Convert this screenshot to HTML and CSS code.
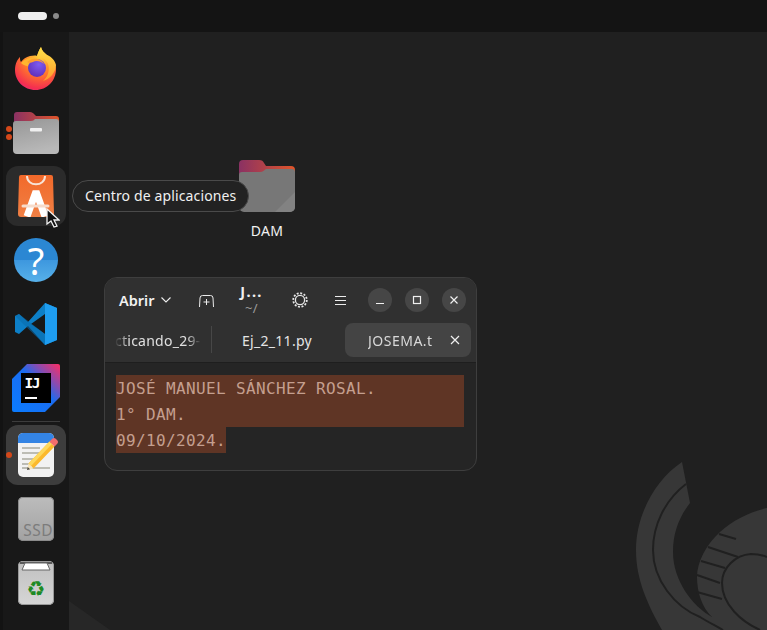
FILE: index.html
```html
<!DOCTYPE html>
<html lang="es">
<head>
<meta charset="utf-8">
<title>Escritorio</title>
<link rel="stylesheet" href="styles.css">
</head>
<body>
<div class="screen">
  <header class="topbar">
    <span class="ws-active"></span>
    <span class="ws-dot"></span>
  </header>
  <div class="main">
    <nav class="dock">
      <div class="slot slot-fx">
        <svg class="ic" width="44" height="44" viewBox="0 0 44 44">
          <defs>
            <radialGradient id="fxb" cx="0.62" cy="0.2" r="0.95"><stop offset="0" stop-color="#ffd93a"/><stop offset="0.45" stop-color="#ff7a2a"/><stop offset="0.8" stop-color="#f5304f"/><stop offset="1" stop-color="#e5218f"/></radialGradient>
            <linearGradient id="fxy" x1="0" y1="0" x2="0" y2="1"><stop offset="0" stop-color="#ffe34a"/><stop offset="1" stop-color="#ff9a2a"/></linearGradient>
            <radialGradient id="fxp" cx="0.6" cy="0.3" r="0.8"><stop offset="0" stop-color="#7d5cf0"/><stop offset="1" stop-color="#5d2bb5"/></radialGradient>
          </defs>
          <path d="M27 1c1 4 3 5 6 8 5 4 9 10 9 14 0 12-9 21-20.500 21C10 44 1 35 1 24c0-3 .5-6 2-9 1-2 2-3 3-4 0 2 0 4 1 5 2-3 5-5 9-6 2 0 5-1 7 0 1-3 2-6 4-9z" fill="url(#fxb)"/>
          <path d="M27 1c-2 3-3 6-4 9 4 1 9 3 11 8 2 6 0 13-5 17 7-2 13-9 13-16-1-4-4-8-9-10-3-2-5-4-6-8z" fill="url(#fxy)"/>
          <path d="M7 17c3-4 9-6 14-5-3 1-6 3-7 5 3-1 6 0 8 1l-6 3c-2-1-6-1-9-4z" fill="#ffb52e"/>
          <circle cx="23" cy="22" r="9" fill="url(#fxp)"/>
          <path d="M13 16c3-3 8-4 11-3 3 1 5 3 6 5-3-3-8-4-11-2-2 1-4 1-6 0z" fill="#ff9d2e"/>
        </svg>
      </div>
      <div class="slot slot-files">
        <span class="pips"><i class="pip"></i><i class="pip"></i></span>
        <svg class="ic" width="46" height="42" viewBox="0 0 46 42">
          <defs>
            <linearGradient id="fb" x1="0" y1="0" x2="1" y2="0"><stop offset="0" stop-color="#8a3163"/><stop offset="1" stop-color="#e0552a"/></linearGradient>
            <linearGradient id="ff" x1="0" y1="0" x2="0.3" y2="1"><stop offset="0" stop-color="#969696"/><stop offset="1" stop-color="#b8b8b8"/></linearGradient>
          </defs>
          <path d="M1 3a3 3 0 0 1 3-3h13c2 0 3 1 4 2l2 2h20a3 3 0 0 1 3 3v12H1z" fill="url(#fb)"/>
          <path d="M0 12a3 3 0 0 1 3-3h15c2 0 3-1 4-2h21a3 3 0 0 1 3 3v28a4 4 0 0 1-4 4H4a4 4 0 0 1-4-4z" fill="url(#ff)"/>
          <rect x="17" y="16" width="12" height="3.500" rx="1" fill="#f0f0f0"/>
        </svg>
      </div>
      <div class="slot tile-hover">
        <svg class="ic" width="36" height="42" viewBox="0 0 36 42">
          <defs><linearGradient id="st" x1="0" y1="0" x2="0" y2="1"><stop offset="0" stop-color="#f2692a"/><stop offset="1" stop-color="#f08045"/></linearGradient></defs>
          <path d="M3 0h30a2 2 0 0 1 2 2l1 37a3 3 0 0 1-3 3H3a3 3 0 0 1-3-3L1 2a2 2 0 0 1 2-2z" fill="url(#st)"/>
          <path d="M9 1c0 11 18 11 18 0" fill="none" stroke="#f7e3d6" stroke-width="2"/>
          <path d="M9 41.500 18 16.500l9 25" fill="none" stroke="#fff" stroke-width="7" stroke-linejoin="bevel"/>
          <path d="M5 31h25" stroke="#f7dccb" stroke-width="3" stroke-linecap="round"/>
        </svg>
        <svg class="cursor" width="14" height="20" viewBox="0 0 14 20"><path d="M1 1v15l4-3 3 6 3-1-3-6h5z" fill="#111" stroke="#f2f2f2" stroke-width="1.300"/></svg>
      </div>
      <div class="slot slot-help">
        <div class="help"><span class="help-q">?</span></div>
      </div>
      <div class="slot slot-code">
        <svg class="ic" width="44" height="44" viewBox="0 0 44 44">
          <path d="M31 1 14 20 5 12l-4 2v16l4 2 9-8 17 19 12-5V6z" fill="#0d7fc7"/>
          <path d="M31 1l12 5v32l-12 5z" fill="#1e9df0"/>
          <path d="M31 12v20L17 22z" fill="#181818"/>
          <path d="M1 14l4-2 26 20v11z" fill="#0a6cab" opacity="0.55"/>
        </svg>
      </div>
      <div class="slot slot-ij">
        <svg class="ic" width="48" height="48" viewBox="0 0 48 48">
          <defs><linearGradient id="ij" x1="0" y1="1" x2="1" y2="0"><stop offset="0" stop-color="#0a7cff"/><stop offset="0.55" stop-color="#1a6cf0"/><stop offset="0.75" stop-color="#8a4bb0"/><stop offset="1" stop-color="#ff2d62"/></linearGradient></defs>
          <path d="M15 0h31a2 2 0 0 1 2 2v31L33 48H2a2 2 0 0 1-2-2V15z" fill="url(#ij)"/>
          <rect x="9" y="9" width="30" height="30" fill="#000"/>
          <text x="12.500" y="24" class="ij-text">IJ</text>
          <rect x="13" y="33" width="12" height="2" fill="#fff"/>
        </svg>
      </div>
      <div class="dock-sep"></div>
      <div class="slot tile-active">
        <span class="pips"><i class="pip"></i></span>
        <svg class="ic ic-open" width="36" height="44" viewBox="0 0 36 44">
          <rect x="0" y="0" width="36" height="44" rx="5" fill="#f2f2f2"/>
          <path d="M5 0h26a5 5 0 0 1 5 5v5H0V5a5 5 0 0 1 5-5z" fill="#3484e4"/>
          <path d="M4 15h18M4 20h17M4 26h13M4 31h9M4 35h28" stroke="#bcbcb4" stroke-width="2"/>
          <path d="M13 33 10.500 30.600 31.500 8.600 36.500 13.400 15.500 35.400z" fill="#fbb92d"/>
          <path d="M10.500 30.600 31.500 8.600 34 11 13 33z" fill="#fdd85c"/>
          <path d="M9 37l1.500-6.400 5 4.800z" fill="#f7e6bd"/>
          <path d="M9 37l.7-3 2.400 2.300z" fill="#444"/>
          <path d="M31.500 8.600 34 6a2.800 2.800 0 0 1 4 0l1 1a2.800 2.800 0 0 1 0 4l-2.500 2.400z" fill="#f36d6d"/>
        </svg>
      </div>
      <div class="slot">
        <div class="ssd"><span class="ssd-label">SSD</span></div>
      </div>
      <div class="slot">
        <div class="trash">
          <svg class="trash-lid" width="36" height="12" viewBox="0 0 36 12">
            <path d="M2 2h32" stroke="#5a5a5a" stroke-width="2"/>
            <path d="M4 9 7 2h22l3 7z" fill="#fff" stroke="#666" stroke-width="1"/>
          </svg>
          <span class="trash-mark">♻</span>
        </div>
      </div>
    </nav>
    <main class="desktop">
      <svg class="wallpaper" width="698" height="598" viewBox="69 32 698 598">
        <path d="M69 601 110 630H69z" fill="#272727"/>
        <path d="M682 462 L690 503 C679 517 673 533 673 552 C673 580 692 606 712 617 C702 608 697 592 697 577 C697 561 707 544 720 532 C733 520 750 512 767 508 V630 H662 C648 605 636 580 636 550 C636 515 655 480 682 462Z" fill="#373737"/>
        <g fill="none" stroke="#202020" stroke-width="2">
          <path d="M686 484 C665 500 653 525 653 550 C653 580 675 607 700 617 C708 622 716 626 723 630"/>
          <path d="M767 557 C760 554 755 554 751 554 C735 555 722 568 722 583 C722 605 742 622 760 630"/>
          <path d="M719 534l17 5M708 547l30 10M701 561l24 7M697 575l23 8M697 592l25 7"/>
        </g>
      </svg>
      <div class="desk-item">
        <svg width="56" height="52" viewBox="0 0 56 52">
          <defs><linearGradient id="db" x1="0" y1="0" x2="1" y2="0"><stop offset="0" stop-color="#8a3163"/><stop offset="1" stop-color="#e0552a"/></linearGradient></defs>
          <path d="M0 4a4 4 0 0 1 4-4h16c3 0 4 1 5 3l2 3h25a4 4 0 0 1 4 4v14H0z" fill="url(#db)"/>
          <path d="M0 15a3 3 0 0 1 3-3h18c3 0 4-2 6-3h26a3 3 0 0 1 3 3v35a5 5 0 0 1-5 5H5a5 5 0 0 1-5-5z" fill="#777"/>
          <path d="M56 32v15a5 5 0 0 1-5 5H36z" fill="#828282"/>
        </svg>
        <span class="desk-label">DAM</span>
      </div>
      <div class="tooltip">Centro de aplicaciones</div>
      <section class="window">
        <div class="titlebar">
          <button class="open-btn">Abrir
            <svg width="10" height="6" viewBox="0 0 10 6"><path d="M.5.5 5 5 9.500.5" fill="none" stroke="#ececec" stroke-width="1.100"/></svg>
          </button>
          <svg class="newtab" width="15" height="12" viewBox="0 0 15 12"><path d="M.5 12 1 3a2.500 2.500 0 0 1 2.500-2.500h8A2.500 2.500 0 0 1 14 3l.5 9" fill="none" stroke="#ececec" stroke-width="1"/><path d="M7.500 4v6M4.500 7h6" stroke="#ececec" stroke-width="1"/></svg>
          <div class="title-block">
            <div class="win-title">J...</div>
            <div class="win-sub">~/</div>
          </div>
          <svg class="gear" width="16" height="16" viewBox="0 0 16 16"><circle cx="8" cy="8" r="4.600" fill="none" stroke="#e6e6e6" stroke-width="1.300"/><circle cx="8" cy="8" r="6.800" fill="none" stroke="#e6e6e6" stroke-width="1.800" stroke-dasharray="2 1.560"/></svg>
          <svg class="menu" width="11" height="9" viewBox="0 0 11 9"><path d="M0 .5h11M0 4.500h11M0 8.500h11" stroke="#ececec" stroke-width="1"/></svg>
          <div class="win-ctrls">
            <span class="ctrl"><svg width="10" height="10" viewBox="0 0 10 10"><path d="M1 8.500h8" stroke="#f0f0f0" stroke-width="1.200"/></svg></span>
            <span class="ctrl"><svg width="10" height="10" viewBox="0 0 10 10"><rect x="1.500" y="1.500" width="7" height="7" fill="none" stroke="#f0f0f0" stroke-width="1.200"/></svg></span>
            <span class="ctrl"><svg width="10" height="10" viewBox="0 0 10 10"><path d="M1.500 1.500l7 7M8.500 1.500l-7 7" stroke="#f0f0f0" stroke-width="1.200"/></svg></span>
          </div>
        </div>
        <div class="tabs">
          <div class="tab tab-first"><span class="tab-clip">cticando_29-</span></div>
          <div class="tab-sep"></div>
          <div class="tab tab-mid">Ej_2_11.py</div>
          <div class="tab tab-current">
            <span class="tab-name">JOSEMA.t</span>
            <svg width="10" height="10" viewBox="0 0 10 10"><path d="M1 1l8 8M9 1l-8 8" stroke="#f0f0f0" stroke-width="1.200"/></svg>
          </div>
        </div>
        <div class="editor">
          <div class="line line-full">JOSÉ MANUEL SÁNCHEZ ROSAL.</div>
          <div class="line line-full">1° DAM.</div>
          <div class="line">09/10/2024.</div>
        </div>
      </section>
    </main>
  </div>
</div>
</body>
</html>
```
FILE: styles.css
```css
* { box-sizing: border-box; }
html, body { margin: 0; padding: 0; height: 100%; background: #202020; overflow: hidden; }
body { font-family: "Noto Sans", "Open Sans", sans-serif; color: #f0f0f0; }

.screen { width: 767px; height: 630px; display: flex; flex-direction: column; }

.topbar { height: 32px; flex: none; background: #141414; display: flex; align-items: center; padding-left: 18px; gap: 6px; }
.ws-active { width: 29px; height: 8px; border-radius: 4px; background: #efefef; }
.ws-dot { width: 6px; height: 6px; border-radius: 50%; background: #8a8a8a; }

.main { flex: 1; display: flex; min-height: 0; }

.dock { width: 69px; flex: none; background: #181818; border-left: 3px solid #131313; display: flex; flex-direction: column; align-items: center; padding: 0 3px; position: relative; }
.slot { position: relative; width: 60px; height: 60px; flex: none; display: flex; align-items: center; justify-content: center; margin-bottom: 4px; }
.ic { display: block; flex: none; }
.ic-open { overflow: visible; }

.slot-fx { margin-top: 6px; margin-bottom: 5px; }
.slot-files { margin-bottom: 3px; }
.tile-hover { background: #2b2b2b; border-radius: 12px; }
.slot-code { margin-bottom: 8px; }
.slot-ij { height: 52px; margin-bottom: 7px; }
.dock-sep { width: 48px; height: 1px; background: #3c3c3c; margin-bottom: 3px; flex: none; }
.tile-active { background: #3d3d3d; border-radius: 12px; }

.pips { position: absolute; left: 0; top: 50%; transform: translateY(-50%); display: flex; flex-direction: column; gap: 2px; }
.pip { display: block; width: 6px; height: 6px; border-radius: 50%; background: #d4481a; }

.cursor { position: absolute; left: 40px; top: 42px; }

.help { width: 44px; height: 44px; border-radius: 50%; background: linear-gradient(#2b87d3 50%, #3d97de 50%, #57b1ea); display: flex; justify-content: center; }
.help-q { font-size: 38px; line-height: 44px; color: #fff; }
.ij-text { font-family: "DejaVu Sans Mono", monospace; font-size: 14.500px; font-weight: 700; letter-spacing: -1.500px; fill: #fff; }

.ssd { width: 36px; height: 44px; border-radius: 5px; background: linear-gradient(#bcbcbc, #a2a2a2); box-shadow: inset 0 0 0 1px #8a8a8a; display: flex; align-items: flex-end; justify-content: flex-end; overflow: hidden; padding: 0 1px 3px 0; }
.ssd-label { font-size: 15.500px; line-height: 1; color: #7c7c7c; letter-spacing: 0.5px; }

.trash { width: 36px; height: 44px; border-radius: 5px; background: linear-gradient(#c0c0c0, #d6d6d6); box-shadow: inset 0 0 0 1px #999; display: flex; flex-direction: column; align-items: center; overflow: hidden; }
.trash-lid { display: block; flex: none; }
.trash-mark { font-family: "DejaVu Sans", sans-serif; font-size: 21px; line-height: 26px; color: #1d8a24; margin-top: 3px; }

.desktop { flex: 1; position: relative; min-width: 0; }
.wallpaper { position: absolute; left: 0; top: 0; }

.desk-item { position: absolute; left: 170px; top: 128px; width: 56px; display: flex; flex-direction: column; align-items: center; gap: 10px; }
.desk-label { font-size: 14px; line-height: 18px; color: #f2f2f2; letter-spacing: 0.3px; }

.tooltip { position: absolute; left: 3px; top: 148px; height: 32px; padding: 0 12px; border-radius: 16px; border: 1px solid #4a4a4a; background: #222; font-size: 14px; line-height: 30px; color: #f0f0f0; white-space: nowrap; letter-spacing: 0.13px; }

.window { position: absolute; left: 35px; top: 245px; width: 373px; height: 194px; border-radius: 13px; border: 1px solid #3e3e3e; background: #252525; overflow: hidden; display: flex; flex-direction: column; }

.titlebar { height: 45px; flex: none; background: #303030; display: flex; align-items: center; padding: 0 0 1px 14px; }
button.open-btn { font: 600 14.500px/1 "Noto Sans", sans-serif; color: #f2f2f2; background: none; border: 0; padding: 0; display: flex; align-items: center; gap: 6px; }
.newtab { margin-left: 28px; margin-top: 2px; flex: none; }
.title-block { width: 30px; margin-left: 23px; text-align: center; flex: none; display: flex; flex-direction: column; gap: 3px; }
.win-title { font-size: 14.500px; font-weight: 700; line-height: 13px; letter-spacing: 1.4px; }
.win-sub { font-size: 13px; line-height: 14px; color: #9a9a9a; letter-spacing: 0.5px; }
.gear { margin-left: 25px; flex: none; }
.menu { margin-left: 27px; flex: none; }
.win-ctrls { margin-left: 22px; display: flex; gap: 13px; }
.ctrl { width: 24px; height: 24px; border-radius: 50%; background: #464646; display: flex; align-items: center; justify-content: center; }

.tabs { height: 40px; flex: none; background: #303030; border-bottom: 1px solid #1e1e1e; display: flex; align-items: flex-start; padding-left: 10px; font-size: 14px; color: #e4e4e4; }
.tab { height: 34px; display: flex; align-items: center; flex: none; }
.tab-first { width: 86px; }
.tab-clip { width: 86px; overflow: hidden; white-space: nowrap; -webkit-mask-image: linear-gradient(90deg, transparent, #000 14px, #000 72px, transparent); mask-image: linear-gradient(90deg, transparent, #000 14px, #000 72px, transparent); color: #e0e0e0; letter-spacing: 0.25px; }
.tab-sep { width: 1px; height: 27px; background: #474747; margin: 3px 0 0 10px; flex: none; }
.tab-mid { width: 130px; justify-content: center; letter-spacing: 0.3px; }
.tab-current { width: 126px; margin-left: 3px; background: #444; border-radius: 8px; padding: 0 11px 0 23px; justify-content: space-between; color: #d8d8d8; }
.tab-name { width: 71px; overflow: hidden; white-space: nowrap; letter-spacing: 0.5px; -webkit-mask-image: linear-gradient(90deg, #000 60px, #555); mask-image: linear-gradient(90deg, #000 60px, #555); }

.editor { flex: 1; padding: 12px 12px 0 11px; font-family: "DejaVu Sans Mono", "Liberation Mono", monospace; font-size: 16px; letter-spacing: 0.37px; color: #c49f8f; }
.line { height: 26px; line-height: 28px; background: #5f3525; white-space: pre; width: max-content; }
.line-full { width: 100%; }
```
